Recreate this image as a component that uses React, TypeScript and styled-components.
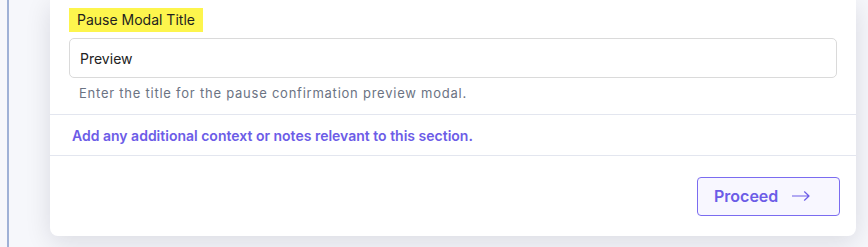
import { createGlobalStyle, styled } from "styled-components";

const GlobalStyle = createGlobalStyle`
  html, body {
    margin: 0;
    padding: 0;
    background: #f6f7fb;
    font-family: Inter, "Noto Sans", sans-serif;
  }
`;

const App = () => {
  return (
    <>
      <GlobalStyle />
      <Page>
        <Rail>
          <Card>
            <FieldSection>
              <Label>Pause Modal Title</Label>
              <Input defaultValue="Preview" />
              <Helper>Enter the title for the pause confirmation preview modal.</Helper>
            </FieldSection>
            <Notes>Add any additional context or notes relevant to this section.</Notes>
            <Footer>
              <ProceedButton>
                Proceed
                <svg width="18" height="10" viewBox="0 0 18 10" fill="none">
                  <path
                    d="M0.5 5H17M12.5 0.8L17 5L12.5 9.2"
                    stroke="currentColor"
                    strokeWidth="1.2"
                    strokeLinecap="round"
                    strokeLinejoin="round"
                  />
                </svg>
              </ProceedButton>
            </Footer>
          </Card>
        </Rail>
      </Page>
    </>
  );
};

export default App;

const Page = styled.div({
  height: "247px",
  display: "flex",
  paddingLeft: "7px",
  overflow: "hidden",
  boxSizing: "border-box",
});

const Rail = styled.div({
  flex: 1,
  borderLeft: "2px solid #9fb1d6",
  paddingLeft: "41px",
  paddingRight: "12px",
  background: "#f6f7fb",
});

const Card = styled.div({
  width: "806px",
  height: "236px",
  background: "#ffffff",
  borderRadius: "0 0 8px 8px",
  boxShadow: "0 6px 26px rgba(20, 20, 40, 0.12)",
  display: "flex",
  flexDirection: "column",
  boxSizing: "border-box",
});

const FieldSection = styled.div({
  padding: "8px 19px 0 19px",
  height: "115px",
  boxSizing: "border-box",
  borderBottom: "1px solid #e3e6ef",
  display: "flex",
  flexDirection: "column",
  alignItems: "flex-start",
});

const Label = styled.span({
  background: "#fdf54d",
  color: "#1f1f1f",
  fontSize: "14px",
  lineHeight: "24px",
  padding: "0 8px",
  marginBottom: "6px",
});

const Input = styled.input({
  width: "100%",
  height: "40px",
  boxSizing: "border-box",
  border: "1px solid #dadada",
  borderRadius: "5px",
  padding: "0 10px",
  fontFamily: "inherit",
  fontSize: "14px",
  color: "#222",
  outline: "none",
});

const Helper = styled.div({
  marginTop: "6px",
  paddingLeft: "10px",
  fontSize: "13px",
  letterSpacing: "0.76px",
  lineHeight: "18px",
  color: "#6b7383",
});

const Notes = styled.div({
  height: "41px",
  boxSizing: "border-box",
  borderBottom: "1px solid #e3e6ef",
  padding: "0 22px",
  display: "flex",
  alignItems: "center",
  fontSize: "14px",
  fontWeight: 600,
  color: "#6c5ce7",
});

const Footer = styled.div({
  flex: 1,
  display: "flex",
  justifyContent: "flex-end",
  alignItems: "center",
  paddingRight: "16px",
});

const ProceedButton = styled.button({
  width: "143px",
  height: "39px",
  boxSizing: "border-box",
  border: "1px solid #7b6cf0",
  borderRadius: "4px",
  background: "#f8f7ff",
  color: "#6c5ce7",
  fontFamily: "inherit",
  fontSize: "16px",
  fontWeight: 600,
  display: "flex",
  alignItems: "center",
  gap: "14px",
  padding: "0 16px",
  cursor: "pointer",
});
